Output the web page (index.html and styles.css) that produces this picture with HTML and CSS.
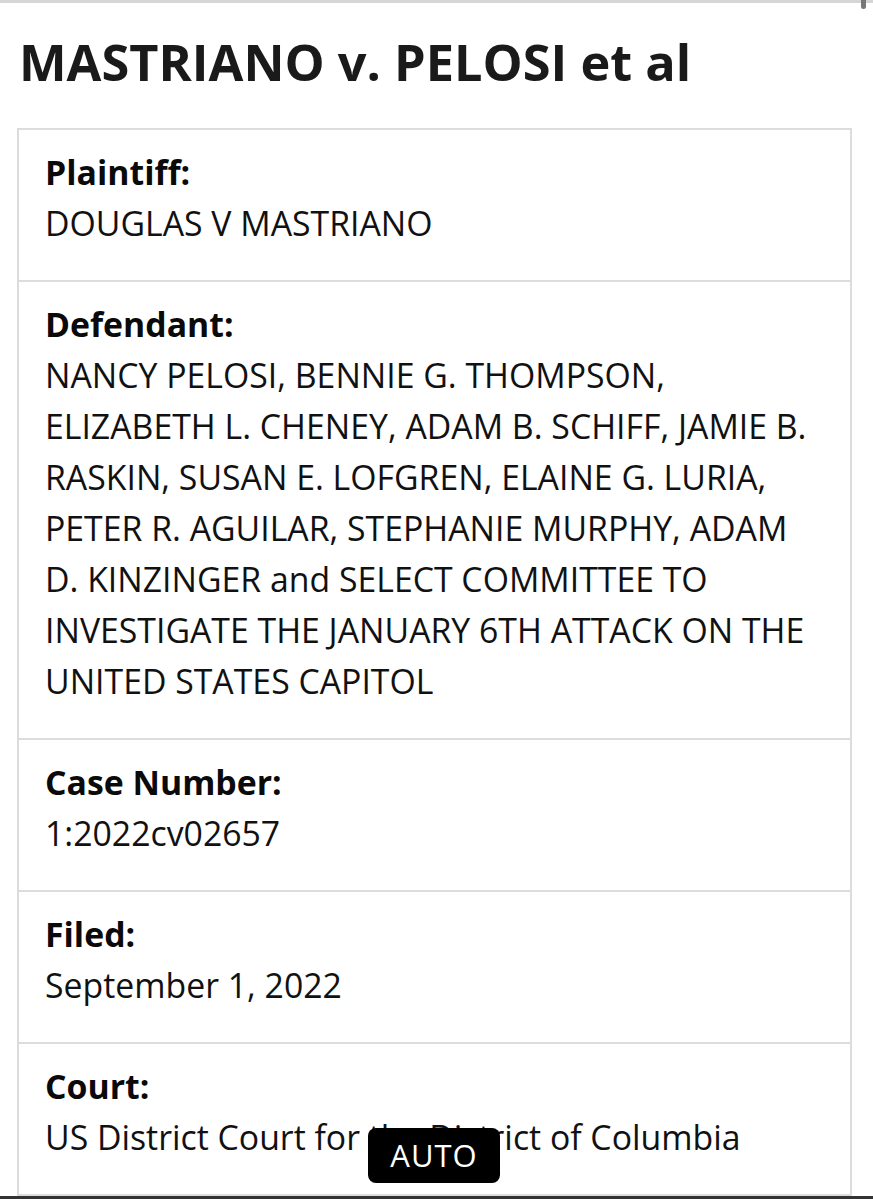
FILE: index.html
```html
<!DOCTYPE html>
<html lang="en">
<head>
<meta charset="utf-8">
<title>MASTRIANO v. PELOSI et al</title>
<link rel="stylesheet" href="styles.css">
</head>
<body>
<div class="topline"><span class="scrollmark"></span></div>
<main class="page">
  <h1 class="title">MASTRIANO v. PELOSI et al</h1>
  <section class="card">
    <div class="row">
      <div class="label">Plaintiff:</div>
      <div class="value">DOUGLAS V MASTRIANO</div>
    </div>
    <div class="row">
      <div class="label">Defendant:</div>
      <div class="value">NANCY PELOSI, BENNIE G. THOMPSON, ELIZABETH L. CHENEY, ADAM B. SCHIFF, JAMIE B. RASKIN, SUSAN E. LOFGREN, ELAINE G. LURIA, PETER R. AGUILAR, STEPHANIE MURPHY, ADAM D. KINZINGER and SELECT COMMITTEE TO INVESTIGATE THE JANUARY 6TH ATTACK ON THE UNITED STATES CAPITOL</div>
    </div>
    <div class="row">
      <div class="label">Case Number:</div>
      <div class="value">1:2022cv02657</div>
    </div>
    <div class="row">
      <div class="label">Filed:</div>
      <div class="value">September 1, 2022</div>
    </div>
    <div class="row">
      <div class="label">Court:</div>
      <div class="value">US District Court for the District of Columbia</div>
    </div>
  </section>
</main>
<div class="auto-badge">AUTO</div>
<div class="bottomline"></div>
</body>
</html>
```
FILE: styles.css
```css
html, body {
  margin: 0;
  padding: 0;
  background: #fff;
}
body {
  font-family: "Open Sans", "Noto Sans", sans-serif;
  color: #111;
  height: 1199px;
  overflow: hidden;
  position: relative;
}
.topline {
  height: 3px;
  background: #d6d6d6;
  position: relative;
}
.scrollmark {
  position: absolute;
  left: 861px;
  top: 0;
  width: 5px;
  height: 9px;
  border-radius: 0 0 3px 3px;
  background: #777;
}
.page {
  padding: 0 21px 0 17px;
}
.title {
  margin: 28px 0 35px 2px;
  font-size: 50.5px;
  line-height: 62px;
  font-weight: 700;
  color: #1a1a1a;
}
.card {
  border: 2px solid #dcdcdc;
}
.row {
  padding: 17px 26px 31px 26px;
  border-top: 2px solid #dcdcdc;
}
.row:first-child {
  border-top: 0;
}
.label {
  font-size: 33.8px;
  line-height: 51px;
  font-weight: 700;
  color: #0a0a0a;
}
.value {
  font-size: 33.8px;
  line-height: 51px;
  font-weight: 400;
}
.auto-badge {
  position: absolute;
  left: 368px;
  top: 1128px;
  width: 132px;
  height: 55px;
  border-radius: 8px;
  background: #000;
  color: #fff;
  font-size: 31px;
  line-height: 55px;
  text-align: center;
  letter-spacing: 1px;
}
.bottomline {
  position: absolute;
  left: 0;
  right: 0;
  bottom: 0;
  height: 3px;
  background: #333;
}
```
